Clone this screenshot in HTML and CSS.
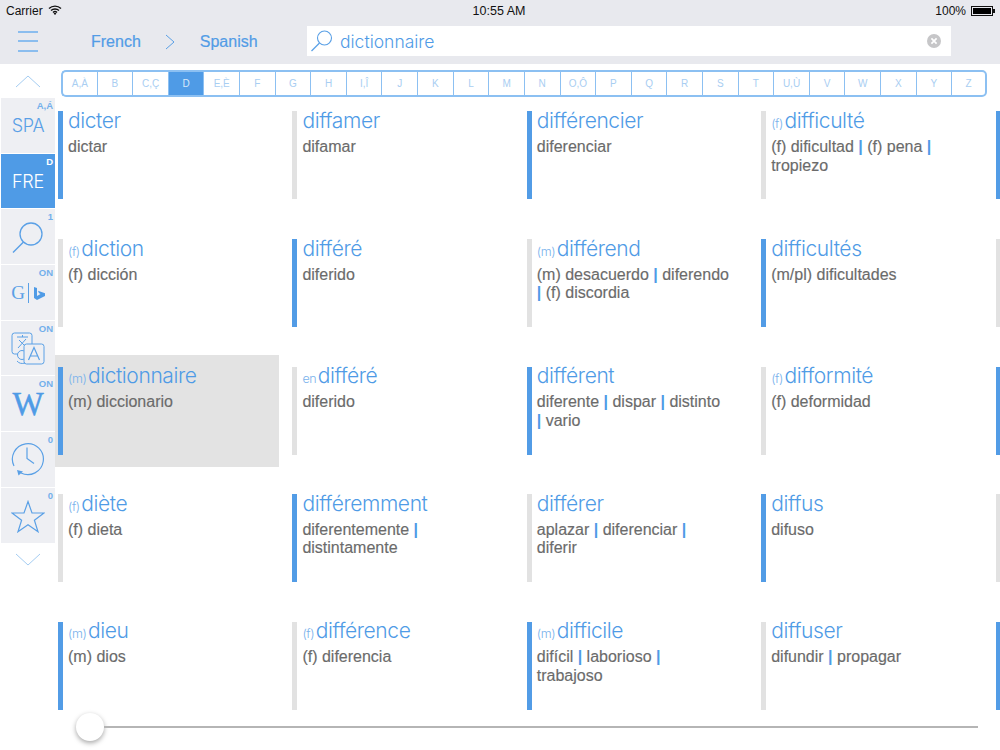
FILE: index.html
```html
<!DOCTYPE html>
<html lang="fr">
<head>
<meta charset="utf-8">
<title>Dictionary</title>
<link rel="stylesheet" href="styles.css">
</head>
<body>
<div class="app">
  <header class="top">
    <div class="status">
      <div class="status-left">Carrier
        <svg class="wifi" width="14" height="10" viewBox="0 0 14 10"><path d="M1 3.6a8.6 8.6 0 0 1 12 0M3 5.6a5.7 5.7 0 0 1 8 0M5 7.4a2.9 2.9 0 0 1 4 0" fill="none" stroke="#111" stroke-width="1.4"/><path d="M7 10 5.6 8.4a2 2 0 0 1 2.8 0z" fill="#111"/></svg>
      </div>
      <div class="status-time">10:55 AM</div>
      <div class="status-right">100%
        <span class="battery"><span class="battery-fill"></span></span><span class="battery-tip"></span>
      </div>
    </div>
    <nav class="nav">
      <button class="menu" aria-label="Menu"><span></span><span></span><span></span></button>
      <div class="langs">
        <span class="lang">French</span>
        <svg class="lang-arrow" width="10" height="16" viewBox="0 0 10 16"><path d="M1 1l8 7-8 7" fill="none" stroke="#5aa0e6" stroke-width="1"/></svg>
        <span class="lang">Spanish</span>
      </div>
      <div class="search">
        <svg class="search-icon" width="24" height="24" viewBox="0 0 24 24"><circle cx="14.5" cy="9" r="7" fill="none" stroke="#5aa0e6" stroke-width="1.1"/><path d="M9.5 14 1.5 22" fill="none" stroke="#5aa0e6" stroke-width="1.3"/></svg>
        <span class="search-text">dictionnaire</span>
        <svg class="clear" width="14" height="14" viewBox="0 0 14 14"><circle cx="7" cy="7" r="7" fill="#c6c6c8"/><path d="M4.4 4.4l5.2 5.2M9.6 4.4 4.4 9.6" stroke="#fff" stroke-width="1.7"/></svg>
      </div>
    </nav>
  </header>

  <div class="body">
    <aside class="side">
      <div class="chev">
        <svg width="26" height="14" viewBox="0 0 26 14"><path d="M1 13 13 2l12 11" fill="none" stroke="#a5cdf2" stroke-width="1"/></svg>
      </div>
      <div class="tool"><span class="badge">A,Á</span><span class="tool-label">SPA</span></div>
      <div class="tool tool-on"><span class="badge">D</span><span class="tool-label">FRE</span></div>
      <div class="tool"><span class="badge">1</span>
        <svg class="lift" width="36" height="36" viewBox="0 0 36 36"><circle cx="21" cy="15" r="11" fill="none" stroke="#5aa0e6" stroke-width="1.3"/><path d="M13.5 23 3 33.5" fill="none" stroke="#5aa0e6" stroke-width="1.5"/></svg>
      </div>
      <div class="tool"><span class="badge">ON</span>
        <div class="gb"><span class="gb-g">G</span><span class="gb-line"></span>
          <svg width="11" height="13" viewBox="0 0 11 13"><path d="M0 0l3 1v8l3.5-2-1.6-.9L4 3.8l7 2.5v2.8L3 13 0 11z" fill="#4f9be6"/></svg>
        </div>
      </div>
      <div class="tool"><span class="badge">ON</span>
        <svg width="34" height="34" viewBox="0 0 34 34"><rect x="1" y="1" width="20" height="21" rx="2.5" fill="none" stroke="#5aa0e6"/><path d="M6 5h11M11.5 3v2M8 8l7 7M15 7l-8 9" fill="none" stroke="#5aa0e6"/><circle cx="11" cy="23" r="4.5" fill="#eeeff3" stroke="#5aa0e6"/><rect x="13" y="12" width="20" height="20" rx="2.5" fill="#eeeff3" stroke="#5aa0e6"/><path d="M17.5 28 23 15.5 28.5 28M19.5 24h7" fill="none" stroke="#5aa0e6" stroke-width="1.2"/><path d="M6 29c2 2.5 5 3 8 2" fill="none" stroke="#5aa0e6"/></svg>
      </div>
      <div class="tool"><span class="badge">ON</span><span class="wiki">W</span></div>
      <div class="tool"><span class="badge">0</span>
        <svg width="34" height="36" viewBox="0 0 34 36"><path d="M3 24A15.5 15.5 0 1 1 10 31" fill="none" stroke="#5aa0e6" stroke-width="1.2"/><path d="M16 5.500v11l7 5" fill="none" stroke="#5aa0e6" stroke-width="1.2"/><path d="M6 28l6 1.500-4.500 4z" fill="#5aa0e6"/></svg>
      </div>
      <div class="tool"><span class="badge">0</span>
        <svg width="34" height="34" viewBox="0 0 34 34"><path d="M17 2.500l4 11.500h12l-9.600 7.200 3.600 11.500L17 25.700 7 32.700l3.600-11.500L1 14h12z" fill="none" stroke="#5aa0e6" stroke-width="1.2"/></svg>
      </div>
      <div class="chev chev-down">
        <svg width="26" height="14" viewBox="0 0 26 14"><path d="M1 1l12 11L25 1" fill="none" stroke="#a5cdf2" stroke-width="1"/></svg>
      </div>
    </aside>

    <main class="content">
      <div class="letters">
        <span>A,À</span><span>B</span><span>C,Ç</span><span class="active">D</span><span>E,È</span><span>F</span><span>G</span><span>H</span><span>I,Î</span><span>J</span><span>K</span><span>L</span><span>M</span><span>N</span><span>O,Ô</span><span>P</span><span>Q</span><span>R</span><span>S</span><span>T</span><span>U,Ù</span><span>V</span><span>W</span><span>X</span><span>Y</span><span>Z</span>
      </div>
      <div class="grid">
        <article class="cell blue"><h2>dicter</h2><p>dictar</p></article>
        <article class="cell"><h2>diffamer</h2><p>difamar</p></article>
        <article class="cell blue"><h2>différencier</h2><p>diferenciar</p></article>
        <article class="cell"><h2><small>(f)</small>difficulté</h2><p>(f) dificultad <b>|</b> (f) pena <b>|</b> tropiezo</p></article>
        <article class="cell blue"></article>

        <article class="cell"><h2><small>(f)</small>diction</h2><p>(f) dicción</p></article>
        <article class="cell blue"><h2>différé</h2><p>diferido</p></article>
        <article class="cell"><h2><small>(m)</small>différend</h2><p>(m) desacuerdo <b>|</b> diferendo <b>|</b> (f) discordia</p></article>
        <article class="cell blue"><h2>difficultés</h2><p>(m/pl) dificultades</p></article>
        <article class="cell"></article>

        <article class="cell blue selected"><h2><small>(m)</small>dictionnaire</h2><p>(m) diccionario</p></article>
        <article class="cell"><h2><small>en</small>différé</h2><p>diferido</p></article>
        <article class="cell blue"><h2>différent</h2><p>diferente <b>|</b> dispar <b>|</b> distinto<br><b>|</b> vario</p></article>
        <article class="cell"><h2><small>(f)</small>difformité</h2><p>(f) deformidad</p></article>
        <article class="cell blue"></article>

        <article class="cell"><h2><small>(f)</small>diète</h2><p>(f) dieta</p></article>
        <article class="cell blue"><h2>différemment</h2><p>diferentemente <b>|</b> distintamente</p></article>
        <article class="cell"><h2>différer</h2><p>aplazar <b>|</b> diferenciar <b>|</b> diferir</p></article>
        <article class="cell blue"><h2>diffus</h2><p>difuso</p></article>
        <article class="cell"></article>

        <article class="cell blue"><h2><small>(m)</small>dieu</h2><p>(m) dios</p></article>
        <article class="cell"><h2><small>(f)</small>différence</h2><p>(f) diferencia</p></article>
        <article class="cell blue"><h2><small>(m)</small>difficile</h2><p>difícil <b>|</b> laborioso <b>|</b> trabajoso</p></article>
        <article class="cell"><h2>diffuser</h2><p>difundir <b>|</b> propagar</p></article>
        <article class="cell blue"></article>
      </div>
      <div class="slider"><span class="thumb"></span><span class="track"></span></div>
    </main>
  </div>
</div>
</body>
</html>
```
FILE: styles.css
```css
* { box-sizing: border-box; }
html, body { margin: 0; padding: 0; background: #fff; }
body { font-family: "Liberation Sans", Arial, sans-serif; }
.app { width: 1000px; height: 750px; overflow: hidden; display: flex; flex-direction: column; }

.top { height: 64px; background: #e8e9ee; flex: none; }
.status { height: 26px; display: grid; grid-template-columns: 1fr auto 1fr; align-items: center; padding: 0 5px 5px 6px; font-size: 12px; color: #111; }
.status-left { display: flex; align-items: center; gap: 5px; }
.wifi { margin-bottom: 1px; }
.status-time { font-size: 12.5px; margin-right: 3px; }
.status-right { display: flex; align-items: center; justify-content: flex-end; font-size: 12px; }
.battery { width: 22px; height: 10px; margin-left: 5px; border: 1px solid #111; padding: 1px; display: block; }
.battery-fill { display: block; width: 100%; height: 100%; background: #000; }
.battery-tip { width: 2px; height: 4px; background: #111; }

.nav { height: 30px; display: flex; align-items: center; }
.menu { width: 20px; height: 21px; margin-left: 18px; padding: 0; border: 0; background: none; display: flex; flex-direction: column; justify-content: space-between; }
.menu span { display: block; height: 2px; background: #8bbdee; }
.langs { margin-left: 53px; width: 216px; padding-top: 2px; display: flex; align-items: center; font-size: 16px; color: #529ce6; }
.lang { -webkit-text-stroke: 0.2px #529ce6; }
.lang-arrow { margin: 0 24.5px; }
.search { width: 644px; height: 30px; background: #fff; display: flex; align-items: center; padding: 0 10px 0 3px; }
.search-icon { flex: none; }
.search-text { margin-left: 6px; flex: 1; font-family: Inter, sans-serif; font-weight: 300; font-size: 17.5px; color: #4f9be6; }
.clear { flex: none; }

.body { flex: 1; display: flex; min-height: 0; }
.side { width: 54px; margin-left: 1px; flex: none; display: flex; flex-direction: column; gap: 1px; }
.chev { height: 33px; display: flex; align-items: center; justify-content: center; }
.chev-down { height: 36px; padding-bottom: 4px; }
.tool { height: 54.7px; background: #eeeff3; position: relative; display: flex; align-items: center; justify-content: center; color: #5aa0e6; padding-top: 2px; }
.tool-on { background: #4f9be6; color: #fff; }
.badge { position: absolute; top: 2px; right: 2px; font-size: 9.5px; font-weight: 700; color: #74afeb; }
.tool-on .badge { color: #fff; }
.tool-label { font-family: Inter, sans-serif; font-weight: 300; font-size: 18px; letter-spacing: -0.3px; margin-top: -2px; }
.lift { margin-top: -2px; }
.gb { display: flex; align-items: center; gap: 3px; }
.gb-g { font-family: "Liberation Serif", serif; font-size: 19px; }
.gb-line { width: 1px; height: 20px; background: #5aa0e6; margin-right: 2px; }
.wiki { font-family: "Liberation Serif", serif; font-size: 33px; line-height: 1; color: #4f9be6; -webkit-text-stroke: 0.5px #4f9be6; }

.content { flex: 1; min-width: 0; display: flex; flex-direction: column; }
.letters { margin: 6px 13px 2.4px 6px; height: 27px; flex: none; display: flex; }
.letters span { flex: 0 0 35.615px; display: flex; align-items: center; justify-content: center; font-size: 10px; color: #a9cef2; border: solid #8cc0f2; border-width: 2px 0 2px 1px; }
.letters span:first-child { border-left-width: 2px; border-radius: 5px 0 0 5px; }
.letters span:last-child { border-right-width: 2px; border-radius: 0 5px 5px 0; }
.letters .active { background: #4f9be6; color: #d8e9fa; }

.grid { height: 612px; flex: none; overflow: hidden; display: grid; grid-template-columns: repeat(5, 224px); grid-auto-rows: 112px; column-gap: 10.4px; row-gap: 15.6px; }
.cell { padding: 12px 18px 0 13px; position: relative; min-width: 0; }
.cell::before { content: ""; position: absolute; left: 3px; top: 12px; width: 5px; height: 88px; background: #e2e2e2; }
.cell.blue::before { background: #529ce6; }
.selected { background: #e3e3e3; }
.cell h2 { margin: -0.4px 0 0; font-family: Inter, sans-serif; font-weight: 300; font-size: 21px; line-height: 19px; letter-spacing: -0.4px; color: #4f9be6; white-space: nowrap; }
.cell small { font-size: 12.5px; line-height: 0; margin-right: 1.5px; letter-spacing: -0.4px; color: #79b2ec; }
.cell p { margin: 8px 0 0; font-size: 16px; line-height: 18.5px; color: #6b6b6b; -webkit-text-stroke: 0.15px #6b6b6b; }
.cell b { font-weight: 700; color: #4f9be6; -webkit-text-stroke: 0; }

.slider { flex: 1; display: flex; align-items: center; padding: 0 22px 0 21px; margin-bottom: 8px; }
.thumb { width: 28px; height: 28px; border-radius: 50%; background: #fff; box-shadow: 0 2px 5px rgba(0,0,0,.35); flex: none; }
.track { flex: 1; height: 2px; background: #b5b5b5; }
```
